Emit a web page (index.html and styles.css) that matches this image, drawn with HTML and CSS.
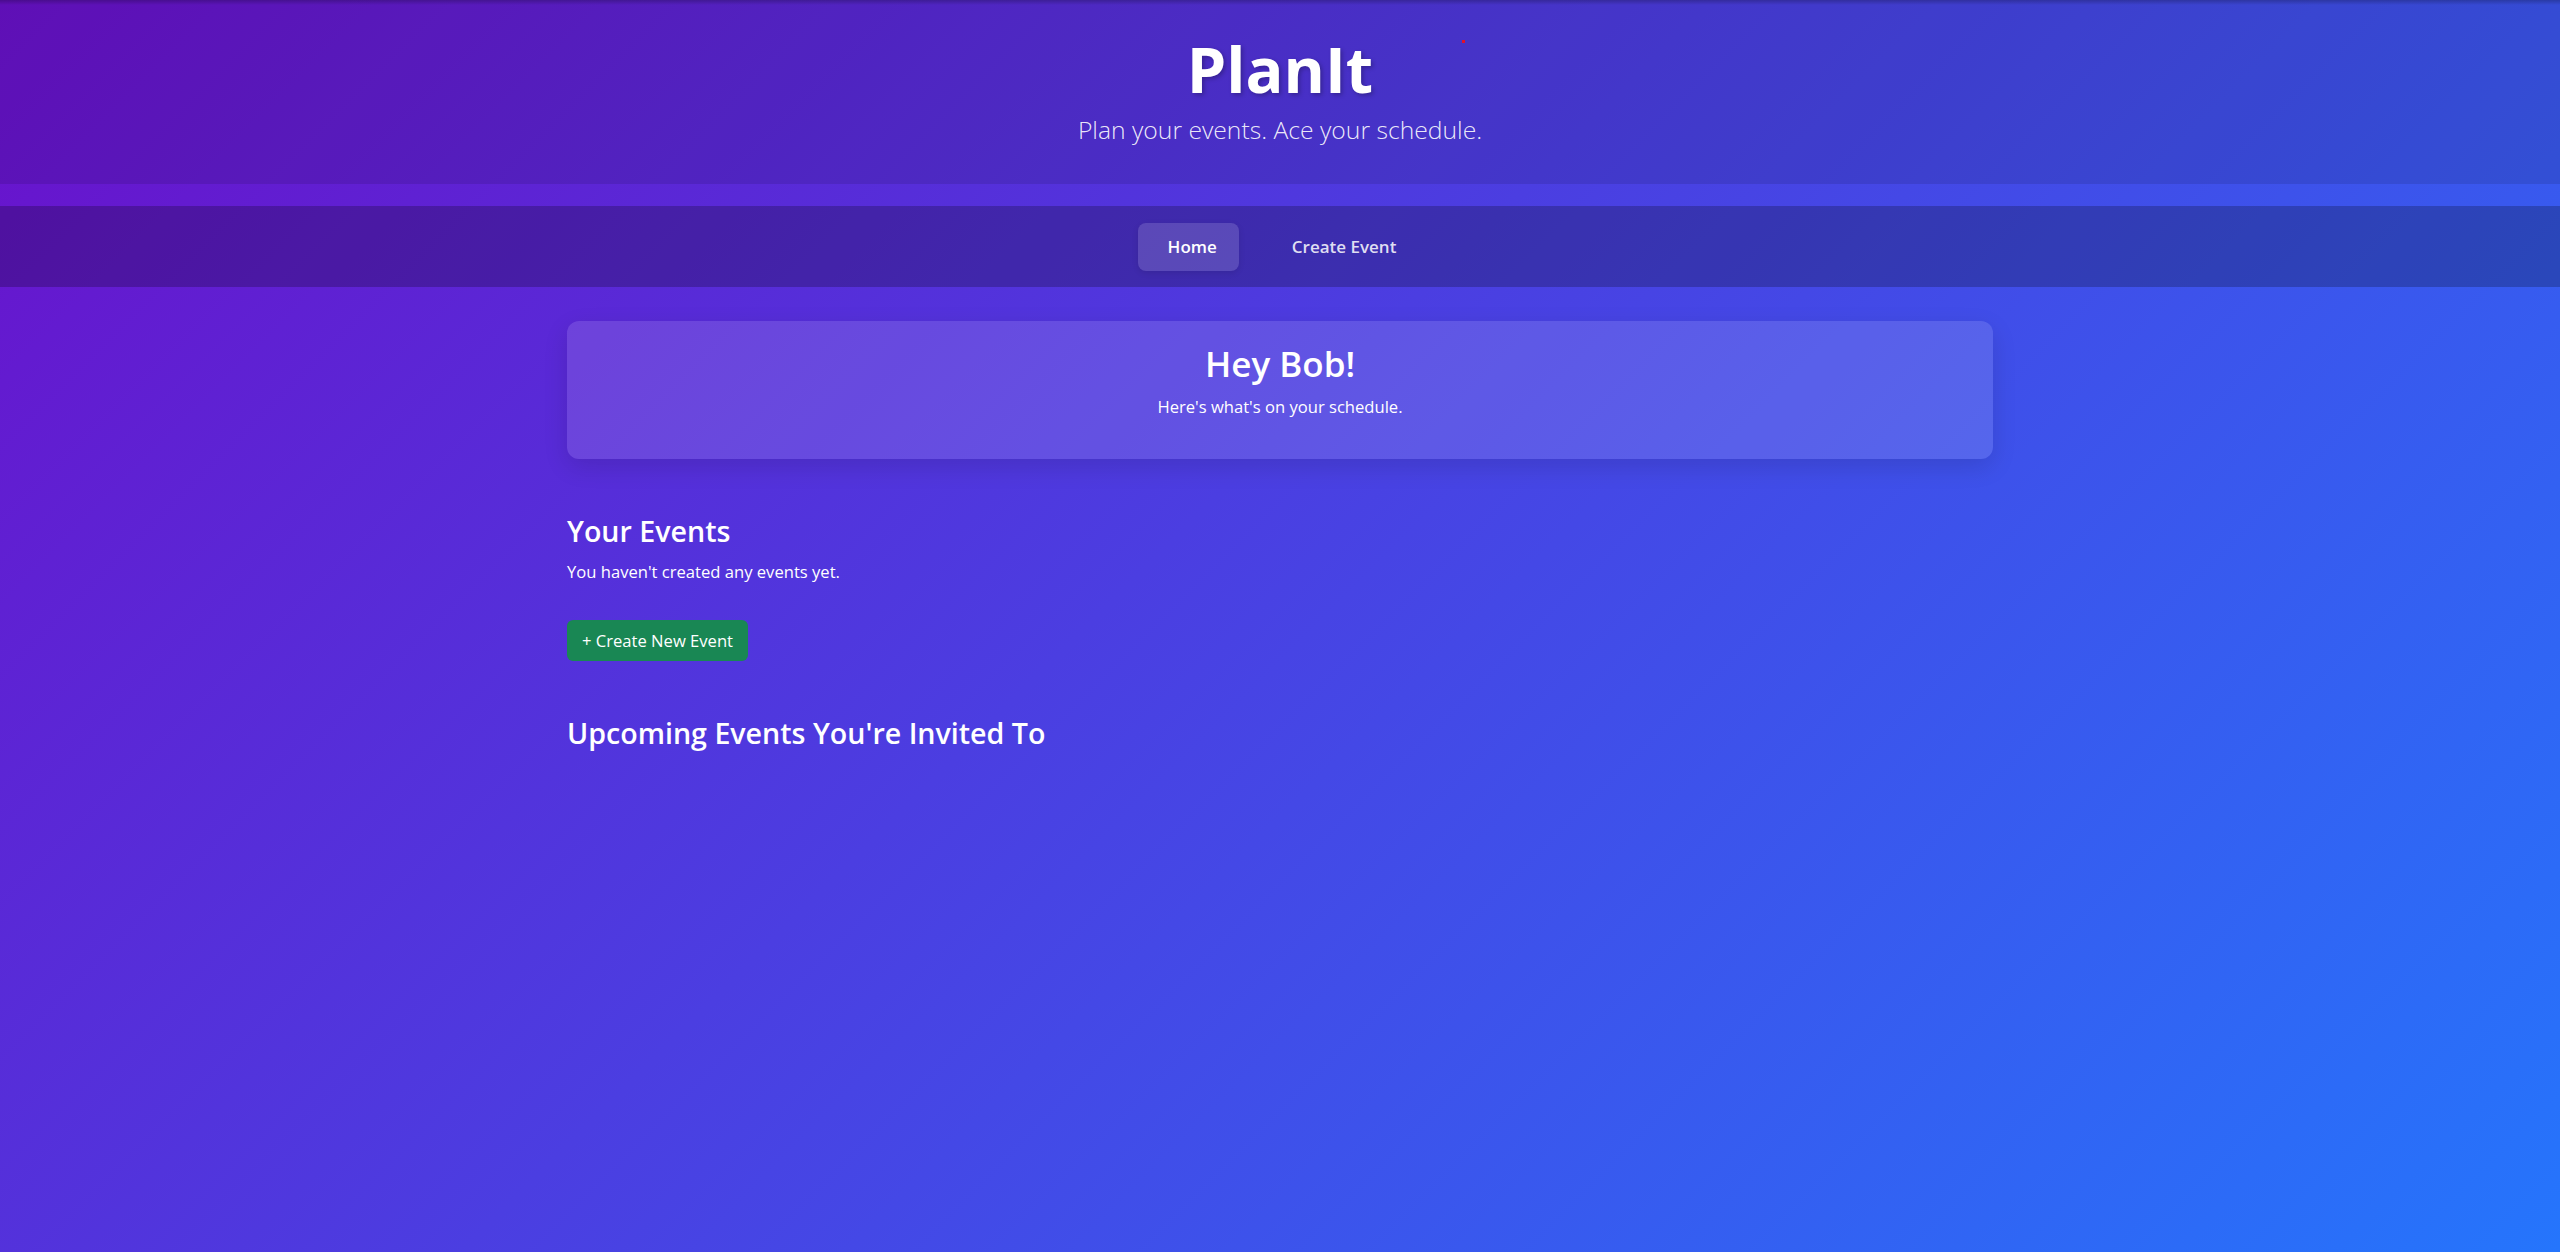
FILE: index.html
```html
<!DOCTYPE html>
<html lang="en">
<head>
<meta charset="utf-8">
<title>PlanIt</title>
<link rel="stylesheet" href="styles.css">
</head>
<body>
  <header class="site-header">
    <h1 class="brand">PlanIt</h1>
    <p class="tagline">Plan your events. Ace your schedule.</p>
    <span class="dot"></span>
  </header>
  <nav class="main-nav">
    <a class="nav-link active" href="#">Home</a>
    <a class="nav-link" href="#">Create Event</a>
  </nav>
  <main class="container">
    <section class="welcome-card">
      <h2 class="welcome-title">Hey Bob!</h2>
      <p class="welcome-text">Here's what's on your schedule.</p>
    </section>
    <section class="events">
      <h2 class="section-title">Your Events</h2>
      <p class="empty-text">You haven't created any events yet.</p>
      <a class="btn-create" href="#">+ Create New Event</a>
    </section>
    <section class="events invited">
      <h2 class="section-title">Upcoming Events You're Invited To</h2>
    </section>
  </main>
</body>
</html>
```
FILE: styles.css
```css
* { box-sizing: border-box; }
html, body { margin: 0; padding: 0; }
body {
  min-height: 100vh;
  font-family: "Segoe UI", "Open Sans", "Noto Sans", sans-serif;
  color: #fff;
  background: linear-gradient(135deg, #6a11cb 0%, #2575fc 100%);
}
.site-header {
  position: relative;
  text-align: center;
  padding: 31px 0 35px;
  background:
    linear-gradient(to bottom, rgba(0, 0, 0, 0.22) 0, rgba(0, 0, 0, 0) 5px),
    rgba(0, 0, 0, 0.1);
}
.brand {
  margin: 0 0 3px;
  font-size: 63px;
  line-height: 1.2;
  font-weight: 700;
  text-shadow: 2px 2px 4px rgba(0, 0, 0, 0.25);
}
.tagline {
  margin: 0;
  font-size: 24.7px;
  line-height: 39px;
  font-weight: 300;
  color: rgba(255, 255, 255, 0.9);
}
.dot {
  position: absolute;
  left: 1462px;
  top: 40px;
  width: 3px;
  height: 3px;
  background: #e0102a;
}
.main-nav {
  margin-top: 22px;
  display: flex;
  justify-content: center;
  gap: 27px;
  padding: 17px 0 16px;
  background: rgba(0, 0, 0, 0.22);
}
.nav-link {
  display: block;
  height: 48px;
  line-height: 48px;
  padding: 0 26px;
  border-radius: 8px;
  font-size: 17px;
  font-weight: 600;
  text-decoration: none;
  color: rgba(255, 255, 255, 0.85);
}
.nav-link.active {
  padding: 0 22px 0 30px;
  color: #fff;
  background: rgba(255, 255, 255, 0.15);
  box-shadow: 0 2px 6px rgba(0, 0, 0, 0.1);
}
.container {
  width: 1426px;
  margin: 0 auto;
  padding-top: 34px;
}
.welcome-card {
  text-align: center;
  padding: 22px 20px 40px;
  border-radius: 12px;
  background: rgba(255, 255, 255, 0.12);
  box-shadow: 0 8px 24px rgba(0, 0, 0, 0.12);
}
.welcome-title {
  margin: 0 0 9px;
  font-size: 35px;
  line-height: 1.2;
  font-weight: 600;
}
.welcome-text {
  margin: 0;
  font-size: 16.6px;
  line-height: 25px;
}
.events { margin-top: 55px; }
.invited { margin-top: 55px; }
.section-title {
  margin: 0;
  font-size: 28.6px;
  line-height: 1.2;
  font-weight: 600;
}
.empty-text {
  margin: 12px 0 36px;
  font-size: 16.6px;
  line-height: 24px;
}
.btn-create {
  display: inline-block;
  height: 41px;
  line-height: 41px;
  padding: 0 15px;
  border-radius: 6px;
  background: #198754;
  color: #fff;
  font-size: 16.6px;
  text-decoration: none;
}
```
